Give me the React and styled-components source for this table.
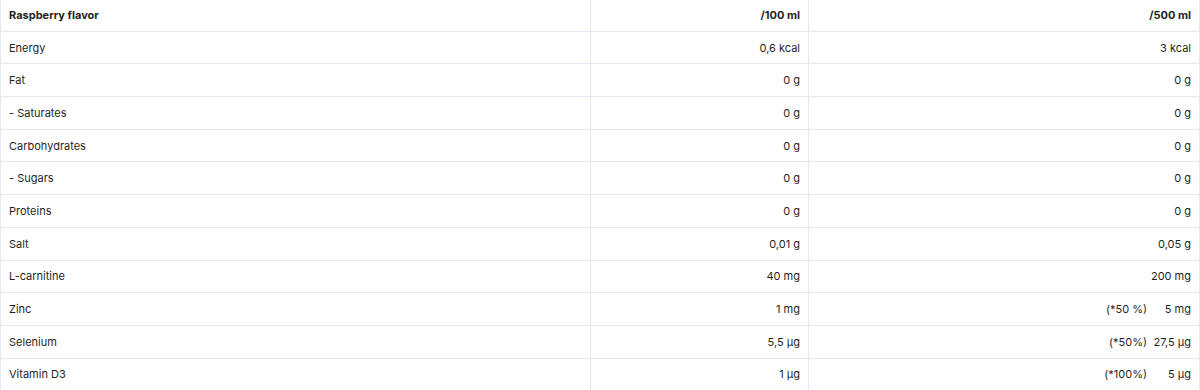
import React from 'react';
import styled, { createGlobalStyle } from 'styled-components';

const GlobalStyle = createGlobalStyle`
  body {
    margin: 0;
    background: #ffffff;
    font-family: Inter, "Noto Sans", Arial, sans-serif;
    color: #1f1f1f;
  }
`;

const Table = styled.table`
  width: 1199px;
  border-collapse: collapse;
  table-layout: fixed;
  font-size: 11px;
  margin-top: -2px;
`;

const Row = styled.tr`
  height: 32.7px;
`;

const Cell = styled.td`
  border: 1px solid #e3e9f2;
  padding: 0 8px;
  line-height: 16px;
  vertical-align: middle;
  text-align: ${({ align }) => align || 'left'};
  font-weight: ${({ bold }) => (bold ? 700 : 400)};
  white-space: nowrap;
`;

const ValueWrap = styled.span`
  display: inline-flex;
  justify-content: flex-end;
  gap: 4px;
`;

const Percent = styled.span``;

const Amount = styled.span`
  display: inline-block;
  min-width: 40px;
  text-align: right;
`;

const rows = [
  ['Energy', '0,6 kcal', '3 kcal'],
  ['Fat', '0 g', '0 g'],
  ['- Saturates', '0 g', '0 g'],
  ['Carbohydrates', '0 g', '0 g'],
  ['- Sugars', '0 g', '0 g'],
  ['Proteins', '0 g', '0 g'],
  ['Salt', '0,01 g', '0,05 g'],
  ['L-carnitine', '40 mg', '200 mg'],
  ['Zinc', '1 mg', '5 mg', '(*50 %)'],
  ['Selenium', '5,5 µg', '27,5 µg', '(*50%)'],
  ['Vitamin D3', '1 µg', '5 µg', '(*100%)'],
];

const App = () => {
  return (
    <>
      <GlobalStyle />
      <Table>
        <colgroup>
          <col style={{ width: 590 }} />
          <col style={{ width: 218 }} />
          <col style={{ width: 391 }} />
        </colgroup>
        <tbody>
          <Row>
            <Cell bold>Raspberry flavor</Cell>
            <Cell bold align="right">/100 ml</Cell>
            <Cell bold align="right">/500 ml</Cell>
          </Row>
          {rows.map(([name, per100, per500, pct]) => (
            <Row key={name}>
              <Cell>{name}</Cell>
              <Cell align="right">{per100}</Cell>
              <Cell align="right">
                {pct ? (
                  <ValueWrap>
                    <Percent>{pct}</Percent>
                    <Amount>{per500}</Amount>
                  </ValueWrap>
                ) : (
                  per500
                )}
              </Cell>
            </Row>
          ))}
        </tbody>
      </Table>
    </>
  );
};

export default App;
